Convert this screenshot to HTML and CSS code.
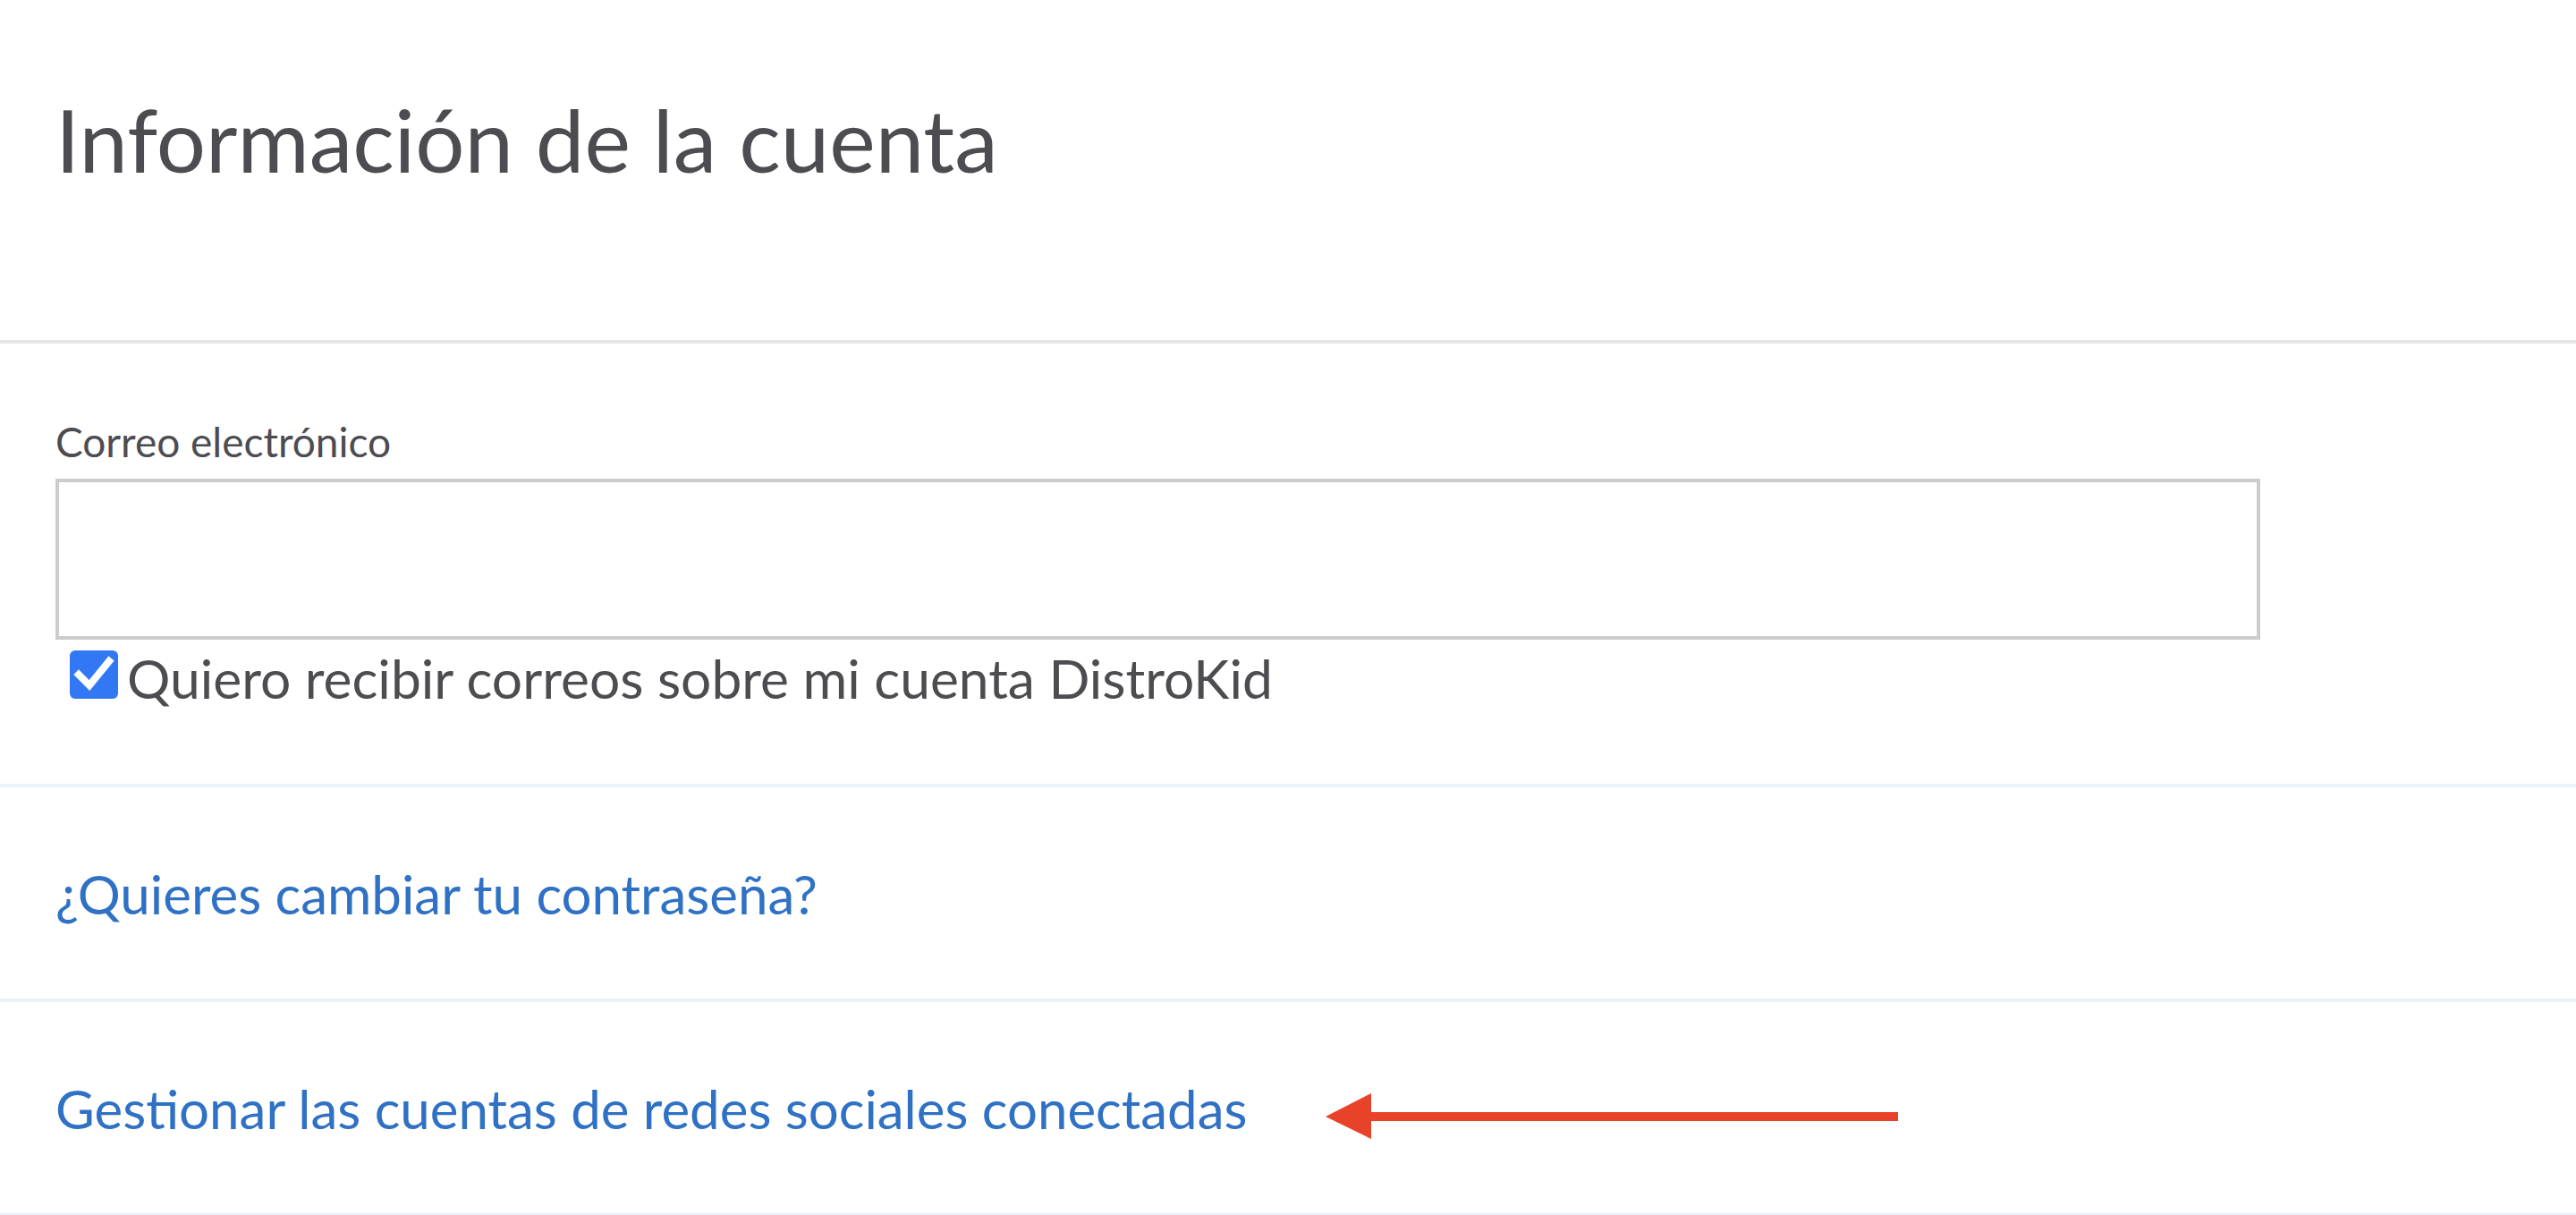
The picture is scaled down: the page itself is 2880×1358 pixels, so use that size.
FILE: index.html
```html
<!DOCTYPE html>
<html lang="es">
<head>
<meta charset="utf-8">
<title>Información de la cuenta</title>
<link rel="stylesheet" href="styles.css">
</head>
<body>
<div class="page">
  <section class="sec sec-head">
    <h1 class="title">Información de la cuenta</h1>
  </section>
  <section class="sec sec-email">
    <label class="label" for="email">Correo electrónico</label>
    <input class="input" id="email" type="text">
    <div class="check-row">
      <span class="checkbox">
        <svg viewBox="0 0 54 54" width="54" height="54"><path d="M10 27 L22 39 L44 12" fill="none" stroke="#fff" stroke-width="8" stroke-linecap="square" stroke-linejoin="miter"/></svg>
      </span>
      <span class="check-text">Quiero recibir correos sobre mi cuenta DistroKid</span>
    </div>
  </section>
  <section class="sec sec-link">
    <a class="link" href="#">¿Quieres cambiar tu contraseña?</a>
  </section>
  <section class="sec sec-link sec-last">
    <a class="link" href="#">Gestionar las cuentas de redes sociales conectadas</a>
    <svg class="arrow" width="640" height="72" viewBox="0 0 640 72">
      <polygon points="0,45 51,19 51,70" fill="#e84228"/>
      <rect x="50" y="40" width="590" height="10" fill="#e84228"/>
    </svg>
  </section>
</div>
</body>
</html>
```

FILE: styles.css
```css
html, body {
  margin: 0;
  padding: 0;
  background: #ffffff;
}
body {
  font-family: Lato, "Open Sans", sans-serif;
  color: #4c4c51;
}
.page {
  display: flex;
  flex-direction: column;
}
.sec {
  padding-left: 62px;
  position: relative;
}
.sec-head {
  padding-top: 96px;
  padding-bottom: 164px;
  border-bottom: 4px solid #e6e6e6;
}
.title {
  margin: 0;
  font-size: 97.5px;
  line-height: 120px;
  font-weight: 400;
  color: #4c4c51;
}
.sec-email {
  padding-top: 86px;
  padding-bottom: 82px;
  border-bottom: 4px solid #e9f1fb;
  display: flex;
  flex-direction: column;
  align-items: flex-start;
}
.label {
  font-size: 46px;
  line-height: 48px;
  color: #4c4c51;
}
.input {
  margin-top: 17px;
  box-sizing: border-box;
  width: 2465px;
  height: 180px;
  border: 4px solid #cccccc;
  border-radius: 0;
  padding: 0 20px;
  background: #fff;
  outline: none;
  font-family: inherit;
  font-size: 40px;
}
.check-row {
  margin-top: 7px;
  display: flex;
  align-items: flex-start;
  height: 72px;
}
.checkbox {
  margin-top: 5px;
  margin-left: 16px;
  width: 54px;
  height: 54px;
  border-radius: 6px;
  background: #3278f5;
  display: flex;
}
.check-text {
  margin-left: 10px;
  font-size: 60.5px;
  line-height: 72px;
  color: #4c4c51;
}
.sec-link {
  padding-top: 83px;
  padding-bottom: 81px;
  border-bottom: 4px solid #e9f1fb;
}
.link {
  display: block;
  font-size: 60px;
  line-height: 72px;
  color: #2f71c4;
  text-decoration: none;
}
.arrow {
  position: absolute;
  left: 1482px;
  top: 83px;
}
```
